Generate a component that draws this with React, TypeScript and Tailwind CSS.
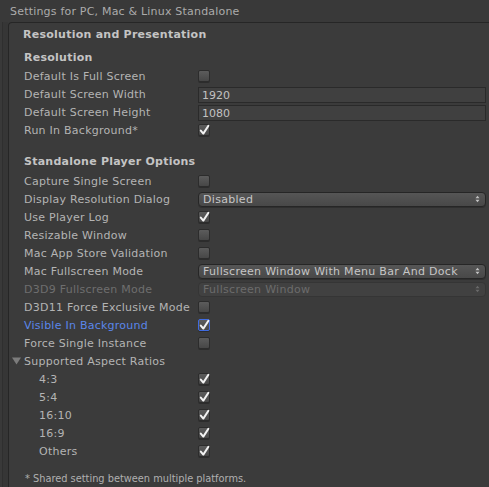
import React from "react";

const FONT = { fontFamily: '"DejaVu Sans", Verdana, sans-serif' };

function Check({ on, focus }: { on?: boolean; focus?: boolean }) {
  return (
    <div
      className={
        "relative w-[12px] h-[12px] rounded-[2px] border " +
        (focus ? "border-[#3f6be0]" : "border-[#2c2c2c]") +
        " bg-gradient-to-b from-[#5c5c5c] to-[#474747] shadow-[0_1px_0_rgba(0,0,0,0.25)]"
      }
    >
      {on && (
        <svg
          className="absolute left-[0px] top-[-1px]"
          width="11"
          height="12"
          viewBox="0 0 11 12"
        >
          <path
            d="M1.8 6.6 L4.3 9.6 L9.4 1.8"
            fill="none"
            stroke="#f2f2f2"
            strokeWidth="2"
            strokeLinecap="round"
            strokeLinejoin="round"
          />
        </svg>
      )}
    </div>
  );
}

function Arrows({ dim }: { dim?: boolean }) {
  const c = dim ? "#6a6a6a" : "#c4c4c4";
  return (
    <svg width="5" height="8" viewBox="0 0 5 8">
      <path d="M0.5 3.2 L2.5 0.8 L4.5 3.2 Z" fill={c} />
      <path d="M0.5 4.8 L2.5 7.2 L4.5 4.8 Z" fill={c} />
    </svg>
  );
}

function Dropdown({ text, dim }: { text: string; dim?: boolean }) {
  return (
    <div
      className={
        "h-[15px] w-full rounded-[4px] border flex items-center justify-between pl-[4px] pr-[5px] text-[11px] " +
        (dim
          ? "border-[#353535] bg-[#414141] text-[#6c6c6c]"
          : "border-[#262626] bg-gradient-to-b from-[#565656] to-[#484848] text-[#c6c6c6] shadow-[0_1px_0_rgba(0,0,0,0.2)]")
      }
      style={{ letterSpacing: "0.3px" }}
    >
      <span className="leading-none">{text}</span>
      <Arrows dim={dim} />
    </div>
  );
}

function Field({ text }: { text: string }) {
  return (
    <div className="h-[16px] mt-[2px] w-full border border-[#2a2a2a] bg-[#404040] flex items-center pl-[3px] text-[11px] text-[#c2c2c2]">
      <span className="leading-none">{text}</span>
    </div>
  );
}

function Row({
  label,
  children,
  indent,
  labelClass,
}: {
  label: React.ReactNode;
  children?: React.ReactNode;
  indent?: boolean;
  labelClass?: string;
}) {
  return (
    <div className="h-[18px] flex items-center pr-[3px]">
      <div
        className={
          "w-[189px] shrink-0 whitespace-nowrap leading-none " +
          (indent ? "pl-[30px] " : "pl-[15px] ") +
          (labelClass ?? "text-[#b4b4b4]")
        }
        style={{ letterSpacing: "0.25px" }}
      >
        {label}
      </div>
      <div className="flex-1 flex items-center">{children}</div>
    </div>
  );
}

function Header({ text, className }: { text: string; className?: string }) {
  return (
    <div
      className={"h-[18px] flex items-center pl-[15px] font-bold text-[#c4c4c4] " + (className ?? "")}
      style={{ letterSpacing: "0.25px" }}
    >
      <span className="leading-none">{text}</span>
    </div>
  );
}

export default function App() {
  return (
    <div
      className="w-[489px] h-[487px] bg-[#393939] overflow-hidden flex flex-col text-[11px]"
      style={FONT}
    >
      <div className="h-[22px] shrink-0 flex items-center pl-[10px] text-[#ababab] text-[11px]">
        <span className="leading-none" style={{ letterSpacing: "0.2px" }}>
          Settings for PC, Mac &amp; Linux Standalone
        </span>
      </div>
      <div className="flex-1 flex">
        <div className="ml-[2px] w-[6px] border-l border-[#2f2f2f] bg-[#363636]" />
        <div className="flex-1 border-t border-l border-[#262626] rounded-tl-[4px] bg-[#3b3b3b] pt-[2px]">
          <Header text="Resolution and Presentation" className="ml-[-1px]" />
          <Header text="Resolution" className="mt-[5px] mb-[1px]" />
          <Row label="Default Is Full Screen">
            <Check />
          </Row>
          <Row label="Default Screen Width">
            <Field text="1920" />
          </Row>
          <Row label="Default Screen Height">
            <Field text="1080" />
          </Row>
          <Row label="Run In Background*">
            <Check on />
          </Row>
          <Header text="Standalone Player Options" className="mt-[13px] mb-[2px]" />
          <Row label="Capture Single Screen">
            <Check />
          </Row>
          <Row label="Display Resolution Dialog">
            <Dropdown text="Disabled" />
          </Row>
          <Row label="Use Player Log">
            <Check on />
          </Row>
          <Row label="Resizable Window">
            <Check />
          </Row>
          <Row label="Mac App Store Validation">
            <Check />
          </Row>
          <Row label="Mac Fullscreen Mode">
            <Dropdown text="Fullscreen Window With Menu Bar And Dock" />
          </Row>
          <Row label="D3D9 Fullscreen Mode" labelClass="text-[#6e6e6e]">
            <Dropdown text="Fullscreen Window" dim />
          </Row>
          <Row label="D3D11 Force Exclusive Mode">
            <Check />
          </Row>
          <Row label="Visible In Background" labelClass="text-[#5a86ea]">
            <Check on focus />
          </Row>
          <Row label="Force Single Instance">
            <Check />
          </Row>
          <div className="h-[18px] flex items-center relative">
            <svg
              className="absolute left-[3px] top-[5px]"
              width="9"
              height="8"
              viewBox="0 0 9 8"
            >
              <path d="M0 0.5 L9 0.5 L4.5 7.5 Z" fill="#7c7c7c" />
            </svg>
            <span
              className="pl-[15px] leading-none text-[#b4b4b4]"
              style={{ letterSpacing: "0.25px" }}
            >
              Supported Aspect Ratios
            </span>
          </div>
          <Row label="4:3" indent>
            <Check on />
          </Row>
          <Row label="5:4" indent>
            <Check on />
          </Row>
          <Row label="16:10" indent>
            <Check on />
          </Row>
          <Row label="16:9" indent>
            <Check on />
          </Row>
          <Row label="Others" indent>
            <Check on />
          </Row>
          <div
            className="mt-[14px] pl-[16px] text-[9.8px] text-[#b0b0b0] leading-none"
          >
            * Shared setting between multiple platforms.
          </div>
        </div>
      </div>
    </div>
  );
}
